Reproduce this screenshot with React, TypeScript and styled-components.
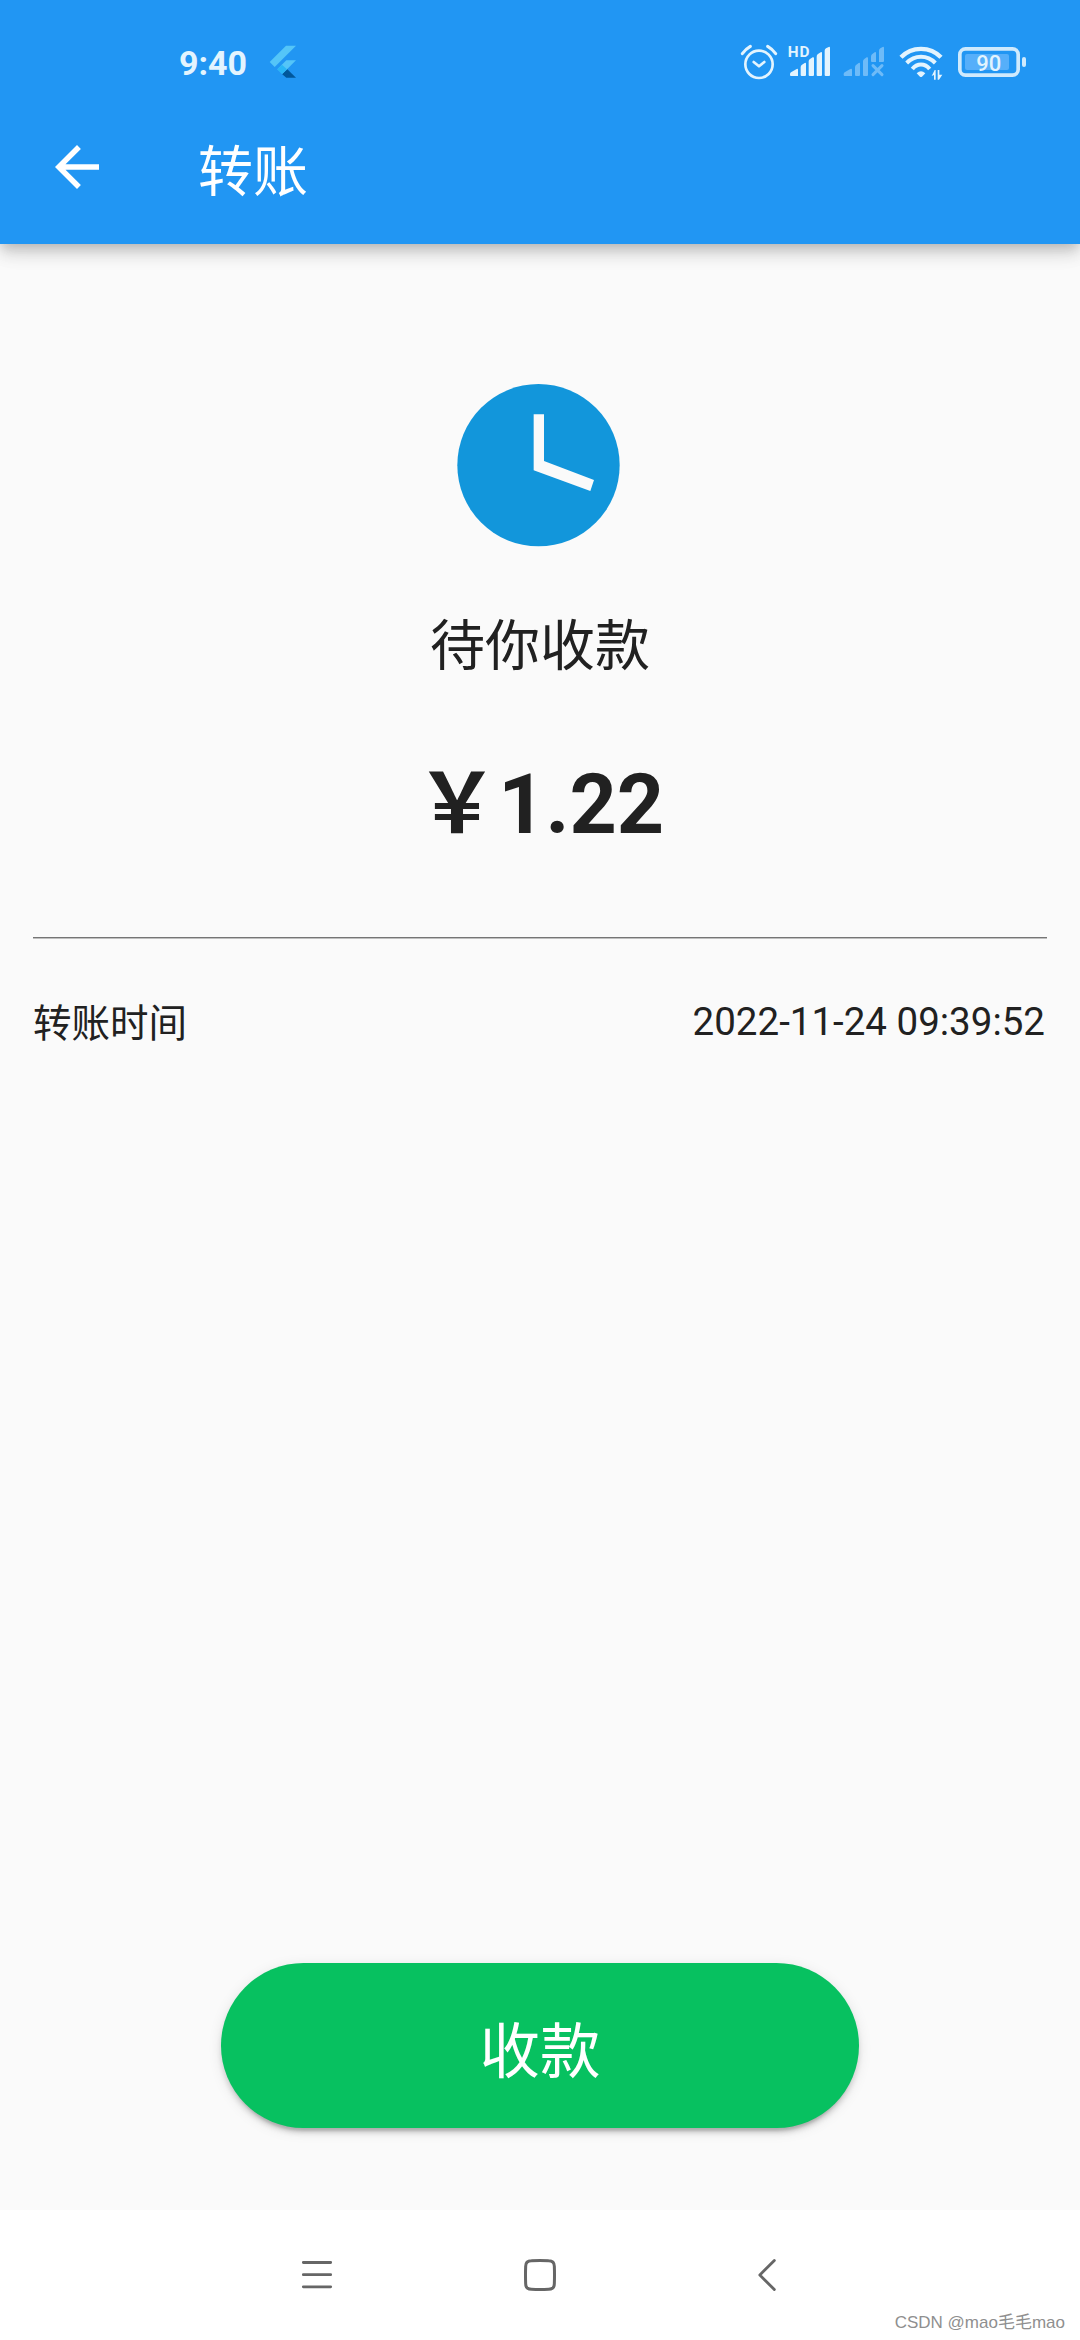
import React from "react";
import styled, { createGlobalStyle } from "styled-components";

const GlobalStyle = createGlobalStyle`
  *, *::before, *::after { box-sizing: border-box; }
  body { margin: 0; background: #fafafa; }
`;

const Screen = styled.div`
  position: relative;
  display: flex;
  flex-direction: column;
  width: 1080px;
  height: 2340px;
  overflow: hidden;
  background: #fafafa;
  color: #212121;
  font-family: Roboto, "Noto Sans CJK SC", sans-serif;
`;

const Header = styled.header`
  flex: none;
  height: 244px;
  background: #2196f3;
  box-shadow:
    0 5px 11px -3px rgba(0, 0, 0, 0.16),
    0 11px 14px rgba(0, 0, 0, 0.11),
    0 3px 27px rgba(0, 0, 0, 0.08);
`;

const StatusBar = styled.div`
  display: flex;
  height: 90px;
  padding: 30px 52px 0 179px;
`;

const Clock = styled.time`
  width: 89px;
  height: 60px;
  line-height: 67px;
  font-size: 34px;
  font-weight: 700;
  color: #e3f4fe;
`;

const StatusIcons = styled.div`
  display: flex;
  margin-left: auto;
`;

const Icon = styled.svg<{ $gap?: number }>`
  display: block;
  flex: none;
  margin-left: ${({ $gap = 0 }) => $gap}px;
`;

const Toolbar = styled.div`
  display: flex;
  align-items: center;
  height: 154px;
  padding-left: 44px;
`;

const IconButton = styled.button`
  display: flex;
  width: 66px;
  height: 66px;
  padding: 0;
  border: 0;
  background: none;
  color: #fff;
`;

const Title = styled.h1`
  margin: 9px 0 0 88px;
  font-size: 55px;
  line-height: 64px;
  font-weight: 400;
  color: #fff;
`;

const Content = styled.main`
  flex: 1;
  display: flex;
  flex-direction: column;
  align-items: center;
  padding: 140px 33px 82px;
`;

const ClockBadge = styled.svg`
  display: block;
  flex: none;
  margin-right: 3px;
`;

const Status = styled.p`
  margin: 67px 0 0;
  font-size: 55px;
  line-height: 64px;
`;

const Amount = styled.p`
  margin: 79px 0 0;
  font-size: 82.5px;
  line-height: 96px;
  font-weight: 700;
`;

const Divider = styled.hr`
  width: 100%;
  height: 2px;
  margin: 84px 0 0;
  border: 0;
  background: linear-gradient(#757575 50%, #bfbfbf 50%);
`;

const DetailRow = styled.div`
  display: flex;
  justify-content: space-between;
  width: 100%;
  margin-top: 61px;
  padding-right: 2px;
  font-size: 38.5px;
  line-height: 44px;
`;

const DetailLabel = styled.span`
  padding-top: 2px;
`;

const ReceiveButton = styled.button`
  width: 638px;
  height: 165px;
  margin-top: auto;
  padding: 15px 0 0;
  border: 0;
  border-radius: 83px;
  background: #07c160;
  color: #fff;
  font: 400 60.5px / 70px Roboto, "Noto Sans CJK SC", sans-serif;
  box-shadow:
    0 8px 3px -5px rgba(0, 0, 0, 0.16),
    0 5px 5px rgba(0, 0, 0, 0.12),
    0 3px 14px rgba(0, 0, 0, 0.1);
`;

const NavBar = styled.nav`
  flex: none;
  display: flex;
  height: 130px;
  padding: 40px 0 0 300px;
  background: #fff;
`;

const Watermark = styled.span`
  position: absolute;
  right: 15px;
  bottom: 6px;
  font: 400 17px / 22px "Liberation Sans", "Noto Sans CJK SC", sans-serif;
  color: #8f8f8f;
  white-space: nowrap;
`;

const PALE = "#e3f4fe";

// Full-width yen sign, one em wide like the CJK glyphs.
const YEN = "\uFFE5";

function FlutterIcon() {
  return (
    <Icon width="30" height="60" viewBox="324 0 90 180">
      <path d="M329 96 378 47h30l-64 64z" fill="#54c5f8" />
      <path d="M352 118 379 91h29l-41 41z" fill="#54c5f8" />
      <path d="M366 132 382 118 408 143.500H379z" fill="#01579b" />
      <path d="M352 118l14-14 15 14-14 14z" fill="#29b6f6" />
    </Icon>
  );
}

function AlarmIcon() {
  return (
    <Icon width="38" height="60" viewBox="60 0 114 180" fill="none" stroke={PALE} strokeLinecap="round" strokeLinejoin="round">
      <circle cx="117" cy="103" r="41" strokeWidth="8" />
      <path d="M67 71Q77 57 91 49M167 71Q157 57 143 49" strokeWidth="9" />
      <path d="M101 96l16 13 16-13" strokeWidth="8" />
    </Icon>
  );
}

function HdSignalIcon() {
  return (
    <Icon $gap={8} width="46" height="60" viewBox="198 0 138 180" fill={PALE}>
      <text x="203" y="81" fontSize="46" fontWeight="700" letterSpacing="3">HD</text>
      <path d="M210 133Q210 129 213 127L230 117Q234 115 234 119V138H213Q210 138 210 135z" />
      <path d="M242 112Q242 106 246 104L254 99Q258 97 258 101V135Q258 138 255 138H245Q242 138 242 135z" />
      <path d="M266 94Q266 89 270 87L278 82Q282 80 282 85V135Q282 138 279 138H269Q266 138 266 135z" />
      <path d="M290 80Q290 74 294 72L302 67Q306 65 306 69V135Q306 138 303 138H293Q290 138 290 135z" />
      <path d="M314 62Q314 57 318 55L326 51Q330 49 330 54V135Q330 138 327 138H317Q314 138 314 135z" />
    </Icon>
  );
}

function NoSignalIcon() {
  return (
    <Icon $gap={10} width="44" height="60" viewBox="366 0 132 180" fill="#6ebbf8">
      <path d="M371 133Q371 129 374 127L391 117Q396 115 396 119V138H374Q371 138 371 135z" />
      <path d="M405 112Q405 106 409 104L416 99Q420 97 420 101V135Q420 138 417 138H408Q405 138 405 135z" />
      <path d="M429 94Q429 89 433 87L440 82Q444 80 444 85V135Q444 138 441 138H432Q429 138 429 135z" />
      <path d="M453 80Q453 74 457 72L464 67Q468 65 468 69V96H456Q453 96 453 93z" />
      <path d="M477 62Q477 57 481 55L488 51Q492 49 492 54V93Q492 96 489 96H477z" />
      <path d="M459 107l27 27M486 107l-27 27" stroke="#6ebbf8" strokeWidth="9" strokeLinecap="round" />
    </Icon>
  );
}

function WifiIcon() {
  return (
    <Icon $gap={12} width="46" height="60" viewBox="54 0 138 180" fill="none" stroke={PALE}>
      <path d="M63 82C95 48 151 48 183 82" strokeWidth="13" />
      <path d="M80 99C104 74 142 74 166 99" strokeWidth="12" />
      <path d="M97 117C111 99 135 99 149 117" strokeWidth="12" />
      <path d="M110 130Q123 117 136 130L126 140Q123 142 120 140z" fill={PALE} stroke="none" />
      <path d="M155 138L164 120h3v29h-5v-14zM173 120h5v14h9L177 149h-4z" fill={PALE} stroke="none" />
    </Icon>
  );
}

function BatteryIcon() {
  return (
    <Icon $gap={12} width="72" height="60" viewBox="228 0 216 180">
      <rect x="239.500" y="56.500" width="175" height="79" rx="17" fill="none" stroke="#cfeafd" strokeWidth="11" />
      <rect x="255" y="72" width="132" height="48" rx="6" fill="#56affa" />
      <rect x="426" y="81" width="12" height="30" rx="6" fill="#cfeafd" />
      <text x="289" y="123" fontSize="66" fontWeight="500" fill={PALE}>90</text>
    </Icon>
  );
}

export default function App() {
  return (
    <>
      <GlobalStyle />
      <Screen>
        <Header>
          <StatusBar>
            <Clock>9:40</Clock>
            <FlutterIcon />
            <StatusIcons>
              <AlarmIcon />
              <HdSignalIcon />
              <NoSignalIcon />
              <WifiIcon />
              <BatteryIcon />
            </StatusIcons>
          </StatusBar>
          <Toolbar>
            <IconButton aria-label="返回">
              <Icon width="66" height="66" viewBox="0 0 24 24" fill="currentColor">
                <path d="M20 11H7.830l5.590-5.590L12 4l-8 8 8 8 1.410-1.410L7.830 13H20z" />
              </Icon>
            </IconButton>
            <Title>转账</Title>
          </Toolbar>
        </Header>

        <Content>
          <ClockBadge width="163" height="163" viewBox="51 42 489 489">
            <circle cx="295.500" cy="285.500" r="243.500" fill="#1296db" />
            <path d="M281 133H312V273L462 330 451 363 281 301z" fill="#fafafa" />
          </ClockBadge>
          <Status>待你收款</Status>
          <Amount>{`${YEN}1.22`}</Amount>
          <Divider />
          <DetailRow>
            <DetailLabel>转账时间</DetailLabel>
            <span>2022-11-24 09:39:52</span>
          </DetailRow>
          <ReceiveButton>收款</ReceiveButton>
        </Content>

        <NavBar>
          <Icon width="34" height="50" viewBox="60 180 102 150" stroke="#666" strokeWidth="8.500" strokeLinecap="round">
            <path d="M70 217.500H152M70 254H152M70 290.500H152" />
          </Icon>
          <Icon $gap={188} width="36" height="50" viewBox="726 180 108 150" fill="none" stroke="#666" strokeWidth="9">
            <path d="M754 212Q780 211 806 212 823 212 823 229 824 255 823 281 823 298 806 298 780 299 754 298 737 298 737 281 736 255 737 229 737 212 754 212z" />
          </Icon>
          <Icon $gap={198} width="22" height="50" viewBox="1428 180 66 150" fill="none" stroke="#666" strokeWidth="8.500" strokeLinecap="round" strokeLinejoin="round">
            <path d="M1483 211.500L1439.500 255 1483 298.500" />
          </Icon>
        </NavBar>
        <Watermark>CSDN @mao毛毛mao</Watermark>
      </Screen>
    </>
  );
}
